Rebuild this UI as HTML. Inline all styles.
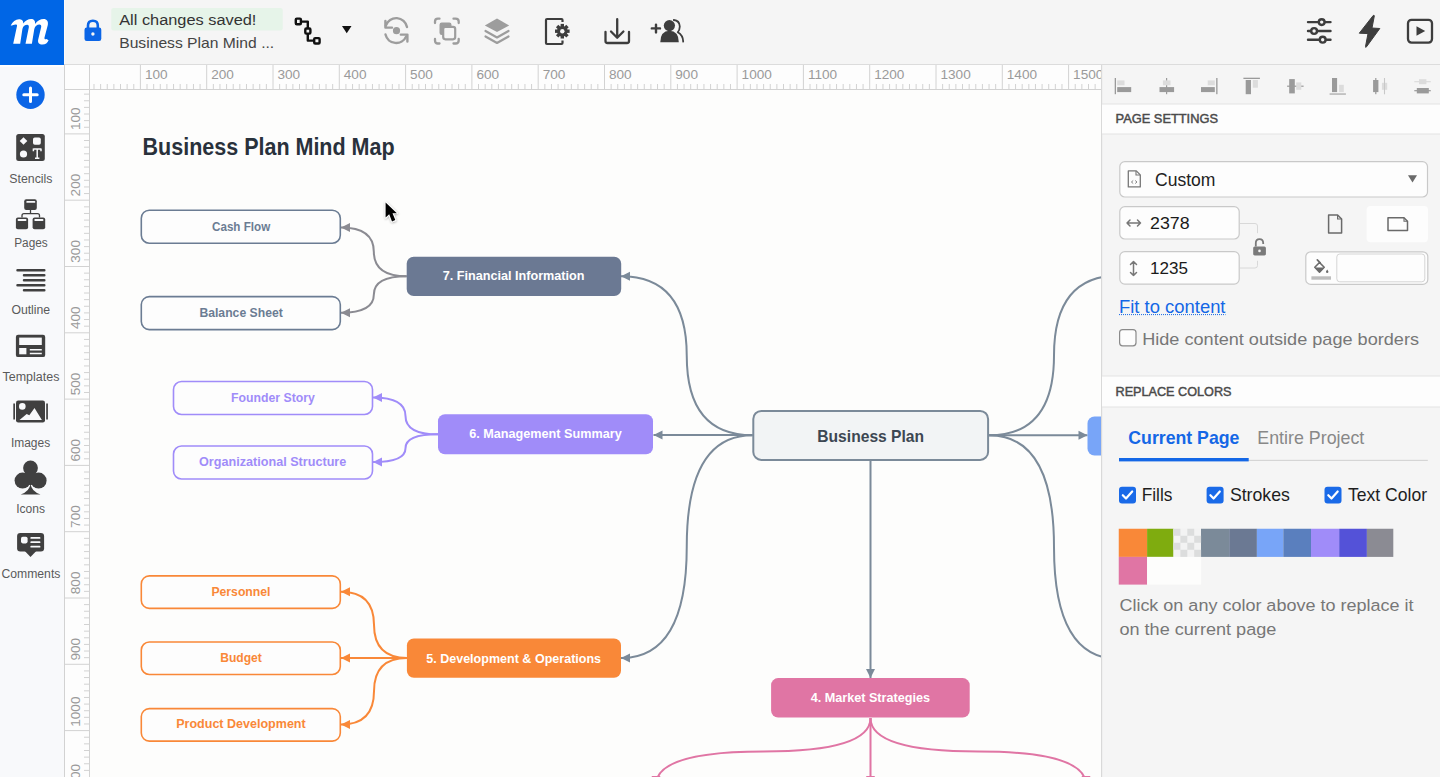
<!DOCTYPE html>
<html><head><meta charset="utf-8"><title>Moqups - Business Plan Mind Map</title>
<style>html,body{margin:0;padding:0;width:1440px;height:777px;overflow:hidden;background:#fdfdfc}svg{display:block;font-family:"Liberation Sans", sans-serif}</style></head>
<body><svg width="1440" height="777" viewBox="0 0 1440 777">
<rect x="0" y="0" width="1440" height="777" fill="#fdfdfc"/>
<rect x="0" y="0" width="1440" height="64" fill="#f5f5f5"/>
<rect x="0" y="64" width="1440" height="1" fill="#dcdcdc"/>
<rect x="0" y="65" width="64" height="712" fill="#f8f9fb"/>
<rect x="0" y="0" width="64" height="65" fill="#0066e6"/>
<rect x="0" y="65" width="64" height="1.8" fill="#ffffff"/>
<rect x="64" y="0" width="1" height="64" fill="#fbfbfb"/>
<path d="M752.5 435.3 Q686.75 435.3 686.75 355.8 Q686.75 276.3 621 276.3 H630" fill="none" stroke="#7b8a99" stroke-width="2"/>
<path d="M621 276.3 L630 271.8 L630 280.8 Z" fill="#7b8a99"/>
<path d="M752.5 435 Q703.0 435 703.0 435.0 Q703.0 435 653.5 435 H662.5" fill="none" stroke="#7b8a99" stroke-width="2"/>
<path d="M653.5 435 L662.5 430.5 L662.5 439.5 Z" fill="#7b8a99"/>
<path d="M752.5 435.3 Q686.75 435.3 686.75 546.65 Q686.75 658 621 658 H630" fill="none" stroke="#7b8a99" stroke-width="2"/>
<path d="M621 658 L630 653.5 L630 662.5 Z" fill="#7b8a99"/>
<path d="M989 435.3 Q1038.25 435.3 1038.25 435.3 Q1038.25 435.3 1087.5 435.3 H1078.5" fill="none" stroke="#7b8a99" stroke-width="2"/>
<path d="M1087.5 435.3 L1078.5 430.8 L1078.5 439.8 Z" fill="#7b8a99"/>
<path d="M989 435.3 Q1054.0 435.3 1054.0 355.4 Q1054.0 275.5 1119 275.5 H1110" fill="none" stroke="#7b8a99" stroke-width="2"/>
<path d="M989 435.3 Q1054.0 435.3 1054.0 547.15 Q1054.0 659 1119 659 H1110" fill="none" stroke="#7b8a99" stroke-width="2"/>
<path d="M870.5 461 Q870.5 569.5 870.5 569.5 Q870.5 569.5 870.5 678 V669" fill="none" stroke="#7b8a99" stroke-width="2"/>
<path d="M870.5 678 L866.0 669 L875.0 669 Z" fill="#7b8a99"/>
<path d="M406.7 276.3 Q373.85 276.3 373.85 251.9 Q373.85 227.5 341 227.5 H350" fill="none" stroke="#8b8b92" stroke-width="2"/>
<path d="M341 227.5 L350 223.0 L350 232.0 Z" fill="#8b8b92"/>
<path d="M406.7 276.3 Q373.85 276.3 373.85 294.55 Q373.85 312.8 341 312.8 H350" fill="none" stroke="#8b8b92" stroke-width="2"/>
<path d="M341 312.8 L350 308.3 L350 317.3 Z" fill="#8b8b92"/>
<path d="M438 434.3 Q405.5 434.3 405.5 415.9 Q405.5 397.5 373 397.5 H382" fill="none" stroke="#a08cf9" stroke-width="2"/>
<path d="M373 397.5 L382 393.0 L382 402.0 Z" fill="#a08cf9"/>
<path d="M438 434.3 Q405.5 434.3 405.5 448.15 Q405.5 462 373 462 H382" fill="none" stroke="#a08cf9" stroke-width="2"/>
<path d="M373 462 L382 457.5 L382 466.5 Z" fill="#a08cf9"/>
<path d="M407 658 Q374.0 658 374.0 624.85 Q374.0 591.7 341 591.7 H350" fill="none" stroke="#f98838" stroke-width="2"/>
<path d="M341 591.7 L350 587.2 L350 596.2 Z" fill="#f98838"/>
<path d="M407 658 Q374.0 658 374.0 658.0 Q374.0 658 341 658 H350" fill="none" stroke="#f98838" stroke-width="2"/>
<path d="M341 658 L350 653.5 L350 662.5 Z" fill="#f98838"/>
<path d="M407 658 Q374.0 658 374.0 691.3 Q374.0 724.6 341 724.6 H350" fill="none" stroke="#f98838" stroke-width="2"/>
<path d="M341 724.6 L350 720.1 L350 729.1 Z" fill="#f98838"/>
<path d="M870.5 718 Q870.5 751.5 763.25 751.5 Q656 751.5 656 785 V776" fill="none" stroke="#e075a4" stroke-width="2"/>
<path d="M656 785 L651.5 776 L660.5 776 Z" fill="#e075a4"/>
<path d="M870.5 718 Q870.5 751.5 978.25 751.5 Q1086 751.5 1086 785 V776" fill="none" stroke="#e075a4" stroke-width="2"/>
<path d="M1086 785 L1081.5 776 L1090.5 776 Z" fill="#e075a4"/>
<path d="M870.5 718 Q870.5 751.5 870.5 751.5 Q870.5 751.5 870.5 785 V776" fill="none" stroke="#e075a4" stroke-width="2"/>
<path d="M870.5 785 L866.0 776 L875.0 776 Z" fill="#e075a4"/>
<rect x="141.3" y="210.2" width="199" height="33" fill="#fdfdfd" rx="8" stroke="#6b7c93" stroke-width="1.6"/>
<rect x="141.3" y="296.6" width="199" height="33" fill="#fdfdfd" rx="8" stroke="#6b7c93" stroke-width="1.6"/>
<rect x="406.7" y="256.7" width="214.5" height="39.3" fill="#6b7993" rx="7"/>
<rect x="173.5" y="381.5" width="199" height="33" fill="#fdfdfd" rx="8" stroke="#a08cf9" stroke-width="1.6"/>
<rect x="173.5" y="446" width="199" height="33" fill="#fdfdfd" rx="8" stroke="#a08cf9" stroke-width="1.6"/>
<rect x="438" y="414.2" width="215" height="40" fill="#a08cf9" rx="7"/>
<rect x="753.3" y="410.9" width="234.8" height="49" fill="#f2f4f5" rx="8" stroke="#7b8a99" stroke-width="2"/>
<rect x="1087.5" y="416.5" width="30" height="39" fill="#78a5f8" rx="7"/>
<rect x="141.3" y="575.9" width="199" height="32.5" fill="#fdfdfd" rx="8" stroke="#f98838" stroke-width="1.6"/>
<rect x="141.3" y="642" width="199" height="32.5" fill="#fdfdfd" rx="8" stroke="#f98838" stroke-width="1.6"/>
<rect x="141.3" y="708.6" width="199" height="32.5" fill="#fdfdfd" rx="8" stroke="#f98838" stroke-width="1.6"/>
<rect x="406.9" y="638.4" width="214.1" height="39.3" fill="#f98838" rx="7"/>
<rect x="771.1" y="678.1" width="198.6" height="39.4" fill="#e075a4" rx="7"/>
<text x="142.6" y="155.2" font-size="24.7" fill="#29313b" font-weight="700" textLength="252" lengthAdjust="spacingAndGlyphs">Business Plan Mind Map</text>
<text x="212" y="231" font-size="12.9" fill="#6b7c93" font-weight="700" textLength="58.2" lengthAdjust="spacingAndGlyphs">Cash Flow</text>
<text x="199.4" y="317" font-size="12.9" fill="#6b7c93" font-weight="700" textLength="83.4" lengthAdjust="spacingAndGlyphs">Balance Sheet</text>
<text x="442.8" y="280.4" font-size="12.9" fill="#ffffff" font-weight="700" textLength="141.7" lengthAdjust="spacingAndGlyphs">7. Financial Information</text>
<text x="231.1" y="402.1" font-size="12.9" fill="#a08cf9" font-weight="700" textLength="83.7" lengthAdjust="spacingAndGlyphs">Founder Story</text>
<text x="199" y="466.3" font-size="12.9" fill="#a08cf9" font-weight="700" textLength="147.3" lengthAdjust="spacingAndGlyphs">Organizational Structure</text>
<text x="469.2" y="438" font-size="12.9" fill="#ffffff" font-weight="700" textLength="152.5" lengthAdjust="spacingAndGlyphs">6. Management Summary</text>
<text x="817.3" y="442.4" font-size="17" fill="#3d4752" font-weight="700" textLength="106.8" lengthAdjust="spacingAndGlyphs">Business Plan</text>
<text x="211.4" y="596" font-size="12.9" fill="#f98838" font-weight="700" textLength="59.1" lengthAdjust="spacingAndGlyphs">Personnel</text>
<text x="220.2" y="662.2" font-size="12.9" fill="#f98838" font-weight="700" textLength="41.7" lengthAdjust="spacingAndGlyphs">Budget</text>
<text x="176.2" y="728.2" font-size="12.9" fill="#f98838" font-weight="700" textLength="129.5" lengthAdjust="spacingAndGlyphs">Product Development</text>
<text x="426.2" y="662.7" font-size="12.9" fill="#ffffff" font-weight="700" textLength="174.9" lengthAdjust="spacingAndGlyphs">5. Development &amp; Operations</text>
<text x="810.7" y="702" font-size="12.9" fill="#ffffff" font-weight="700" textLength="119.3" lengthAdjust="spacingAndGlyphs">4. Market Strategies</text>
<defs><filter id="sh" x="-50%" y="-50%" width="200%" height="200%"><feDropShadow dx="0.3" dy="0.8" stdDeviation="0.9" flood-color="#000" flood-opacity="0.35"/></filter></defs>
<path d="M385.6 202.4 L385.6 217.6 L389.2 214.2 L392 221.4 L395.3 220.1 L392.5 213.2 L396.9 213.2 Z" fill="#000" stroke="#fff" stroke-width="1.8" stroke-linejoin="round" paint-order="stroke" filter="url(#sh)"/>
<rect x="64" y="65" width="1037" height="24" fill="#fdfdfd"/>
<rect x="64" y="65" width="25" height="712" fill="#fdfdfd"/>
<rect x="64" y="64" width="1" height="713" fill="#d2d2d2"/>
<rect x="64" y="89" width="1037" height="1" fill="#d2d2d2"/>
<rect x="89" y="65" width="1" height="712" fill="#d2d2d2"/>
<path d="M93.99 84V89 M100.62 84V89 M107.25 84V89 M113.88 84V89 M120.51 84V89 M127.14 84V89 M133.77 84V89 M140.40 65V89 M147.03 84V89 M153.66 84V89 M160.29 84V89 M166.92 84V89 M173.55 84V89 M180.18 84V89 M186.81 84V89 M193.44 84V89 M200.07 84V89 M206.70 65V89 M213.33 84V89 M219.96 84V89 M226.59 84V89 M233.22 84V89 M239.85 84V89 M246.48 84V89 M253.11 84V89 M259.74 84V89 M266.37 84V89 M273.00 65V89 M279.63 84V89 M286.26 84V89 M292.89 84V89 M299.52 84V89 M306.15 84V89 M312.78 84V89 M319.41 84V89 M326.04 84V89 M332.67 84V89 M339.30 65V89 M345.93 84V89 M352.56 84V89 M359.19 84V89 M365.82 84V89 M372.45 84V89 M379.08 84V89 M385.71 84V89 M392.34 84V89 M398.97 84V89 M405.60 65V89 M412.23 84V89 M418.86 84V89 M425.49 84V89 M432.12 84V89 M438.75 84V89 M445.38 84V89 M452.01 84V89 M458.64 84V89 M465.27 84V89 M471.90 65V89 M478.53 84V89 M485.16 84V89 M491.79 84V89 M498.42 84V89 M505.05 84V89 M511.68 84V89 M518.31 84V89 M524.94 84V89 M531.57 84V89 M538.20 65V89 M544.83 84V89 M551.46 84V89 M558.09 84V89 M564.72 84V89 M571.35 84V89 M577.98 84V89 M584.61 84V89 M591.24 84V89 M597.87 84V89 M604.50 65V89 M611.13 84V89 M617.76 84V89 M624.39 84V89 M631.02 84V89 M637.65 84V89 M644.28 84V89 M650.91 84V89 M657.54 84V89 M664.17 84V89 M670.80 65V89 M677.43 84V89 M684.06 84V89 M690.69 84V89 M697.32 84V89 M703.95 84V89 M710.58 84V89 M717.21 84V89 M723.84 84V89 M730.47 84V89 M737.10 65V89 M743.73 84V89 M750.36 84V89 M756.99 84V89 M763.62 84V89 M770.25 84V89 M776.88 84V89 M783.51 84V89 M790.14 84V89 M796.77 84V89 M803.40 65V89 M810.03 84V89 M816.66 84V89 M823.29 84V89 M829.92 84V89 M836.55 84V89 M843.18 84V89 M849.81 84V89 M856.44 84V89 M863.07 84V89 M869.70 65V89 M876.33 84V89 M882.96 84V89 M889.59 84V89 M896.22 84V89 M902.85 84V89 M909.48 84V89 M916.11 84V89 M922.74 84V89 M929.37 84V89 M936.00 65V89 M942.63 84V89 M949.26 84V89 M955.89 84V89 M962.52 84V89 M969.15 84V89 M975.78 84V89 M982.41 84V89 M989.04 84V89 M995.67 84V89 M1002.30 65V89 M1008.93 84V89 M1015.56 84V89 M1022.19 84V89 M1028.82 84V89 M1035.45 84V89 M1042.08 84V89 M1048.71 84V89 M1055.34 84V89 M1061.97 84V89 M1068.60 65V89 M1075.23 84V89 M1081.86 84V89 M1088.49 84V89 M1095.12 84V89 M84 94.12H89 M84 100.75H89 M84 107.38H89 M84 114.01H89 M84 120.64H89 M84 127.27H89 M64 133.90H89 M84 140.53H89 M84 147.16H89 M84 153.79H89 M84 160.42H89 M84 167.05H89 M84 173.68H89 M84 180.31H89 M84 186.94H89 M84 193.57H89 M64 200.20H89 M84 206.83H89 M84 213.46H89 M84 220.09H89 M84 226.72H89 M84 233.35H89 M84 239.98H89 M84 246.61H89 M84 253.24H89 M84 259.87H89 M64 266.50H89 M84 273.13H89 M84 279.76H89 M84 286.39H89 M84 293.02H89 M84 299.65H89 M84 306.28H89 M84 312.91H89 M84 319.54H89 M84 326.17H89 M64 332.80H89 M84 339.43H89 M84 346.06H89 M84 352.69H89 M84 359.32H89 M84 365.95H89 M84 372.58H89 M84 379.21H89 M84 385.84H89 M84 392.47H89 M64 399.10H89 M84 405.73H89 M84 412.36H89 M84 418.99H89 M84 425.62H89 M84 432.25H89 M84 438.88H89 M84 445.51H89 M84 452.14H89 M84 458.77H89 M64 465.40H89 M84 472.03H89 M84 478.66H89 M84 485.29H89 M84 491.92H89 M84 498.55H89 M84 505.18H89 M84 511.81H89 M84 518.44H89 M84 525.07H89 M64 531.70H89 M84 538.33H89 M84 544.96H89 M84 551.59H89 M84 558.22H89 M84 564.85H89 M84 571.48H89 M84 578.11H89 M84 584.74H89 M84 591.37H89 M64 598.00H89 M84 604.63H89 M84 611.26H89 M84 617.89H89 M84 624.52H89 M84 631.15H89 M84 637.78H89 M84 644.41H89 M84 651.04H89 M84 657.67H89 M64 664.30H89 M84 670.93H89 M84 677.56H89 M84 684.19H89 M84 690.82H89 M84 697.45H89 M84 704.08H89 M84 710.71H89 M84 717.34H89 M84 723.97H89 M64 730.60H89 M84 737.23H89 M84 743.86H89 M84 750.49H89 M84 757.12H89 M84 763.75H89 M84 770.38H89" stroke="#d2d2d2" stroke-width="1" fill="none"/>
<text x="144.9" y="79.3" font-size="13.6" fill="#9a9a9a">100</text>
<text x="211.2" y="79.3" font-size="13.6" fill="#9a9a9a">200</text>
<text x="277.5" y="79.3" font-size="13.6" fill="#9a9a9a">300</text>
<text x="343.8" y="79.3" font-size="13.6" fill="#9a9a9a">400</text>
<text x="410.1" y="79.3" font-size="13.6" fill="#9a9a9a">500</text>
<text x="476.4" y="79.3" font-size="13.6" fill="#9a9a9a">600</text>
<text x="542.7" y="79.3" font-size="13.6" fill="#9a9a9a">700</text>
<text x="609.0" y="79.3" font-size="13.6" fill="#9a9a9a">800</text>
<text x="675.3" y="79.3" font-size="13.6" fill="#9a9a9a">900</text>
<text x="741.6" y="79.3" font-size="13.6" fill="#9a9a9a">1000</text>
<text x="807.9" y="79.3" font-size="13.6" fill="#9a9a9a">1100</text>
<text x="874.2" y="79.3" font-size="13.6" fill="#9a9a9a">1200</text>
<text x="940.5" y="79.3" font-size="13.6" fill="#9a9a9a">1300</text>
<text x="1006.8" y="79.3" font-size="13.6" fill="#9a9a9a">1400</text>
<text x="1073.1" y="79.3" font-size="13.6" fill="#9a9a9a">1500</text>
<g>
<text transform="translate(79.8 130.10) rotate(-90)" font-size="13.6" fill="#9a9a9a">100</text>
<text transform="translate(79.8 196.40) rotate(-90)" font-size="13.6" fill="#9a9a9a">200</text>
<text transform="translate(79.8 262.70) rotate(-90)" font-size="13.6" fill="#9a9a9a">300</text>
<text transform="translate(79.8 329.00) rotate(-90)" font-size="13.6" fill="#9a9a9a">400</text>
<text transform="translate(79.8 395.30) rotate(-90)" font-size="13.6" fill="#9a9a9a">500</text>
<text transform="translate(79.8 461.60) rotate(-90)" font-size="13.6" fill="#9a9a9a">600</text>
<text transform="translate(79.8 527.90) rotate(-90)" font-size="13.6" fill="#9a9a9a">700</text>
<text transform="translate(79.8 594.20) rotate(-90)" font-size="13.6" fill="#9a9a9a">800</text>
<text transform="translate(79.8 660.50) rotate(-90)" font-size="13.6" fill="#9a9a9a">900</text>
<text transform="translate(79.8 726.80) rotate(-90)" font-size="13.6" fill="#9a9a9a">1000</text>
<text transform="translate(79.8 793.10) rotate(-90)" font-size="13.6" fill="#9a9a9a">1100</text>
</g>
<rect x="1101" y="65" width="339" height="712" fill="#f5f5f5"/>
<rect x="1101" y="65" width="1.2" height="712" fill="#d9d9d9"/>
<rect x="1102" y="104" width="339" height="30" fill="#fdfdfd"/>
<rect x="1102" y="103.5" width="339" height="1" fill="#e3e3e3"/>
<rect x="1102" y="133.5" width="339" height="1" fill="#e3e3e3"/>
<rect x="1102" y="376" width="339" height="31" fill="#fdfdfd"/>
<rect x="1102" y="375.5" width="339" height="1" fill="#e3e3e3"/>
<rect x="1102" y="406.5" width="339" height="1" fill="#e3e3e3"/>
<rect x="1114.7" y="78" width="1.3" height="16.2" fill="#9a9a9a"/>
<rect x="1117.2" y="80.4" width="7.3" height="4.9" fill="#dcdcdc"/>
<rect x="1117.2" y="87.1" width="14" height="5" fill="#9a9a9a"/>
<rect x="1166" y="78" width="1.2" height="16.2" fill="#9a9a9a"/>
<rect x="1162.9" y="80.4" width="7.6" height="4.9" fill="#dcdcdc"/>
<rect x="1159.5" y="87.1" width="14.6" height="5" fill="#9a9a9a"/>
<rect x="1216.2" y="78" width="1.3" height="16.2" fill="#9a9a9a"/>
<rect x="1207.7" y="80.4" width="7.1" height="4.9" fill="#dcdcdc"/>
<rect x="1201" y="87.1" width="13.8" height="5" fill="#9a9a9a"/>
<rect x="1243.4" y="77.7" width="16.5" height="1.3" fill="#9a9a9a"/>
<rect x="1245.7" y="80" width="5.3" height="14.2" fill="#9a9a9a"/>
<rect x="1252.8" y="80" width="5.1" height="7.7" fill="#dcdcdc"/>
<rect x="1287.1" y="85.6" width="16.5" height="1.2" fill="#9a9a9a"/>
<rect x="1289.2" y="79.1" width="5.6" height="14.3" fill="#9a9a9a"/>
<rect x="1296.2" y="82.4" width="5.1" height="7.4" fill="#dcdcdc"/>
<rect x="1329.6" y="93.3" width="16.3" height="1.5" fill="#b5b5b5"/>
<rect x="1332" y="78" width="5.1" height="14.1" fill="#9a9a9a"/>
<rect x="1339.1" y="84.8" width="4.7" height="7.3" fill="#dcdcdc"/>
<rect x="1375.2" y="78" width="1.2" height="16.2" fill="#9a9a9a"/>
<rect x="1373.1" y="80" width="5.3" height="12.1" fill="#9a9a9a"/>
<rect x="1383.9" y="78" width="1.2" height="16.2" fill="#dcdcdc"/>
<rect x="1381.9" y="82.8" width="5.3" height="7" fill="#dcdcdc"/>
<rect x="1384" y="78" width="1" height="16.2" fill="#c8c8c8"/>
<rect x="1414.3" y="81.1" width="16.5" height="1.2" fill="#dcdcdc"/>
<rect x="1419" y="79.2" width="7.4" height="5" fill="#dcdcdc"/>
<rect x="1414.3" y="90.1" width="16.5" height="1.2" fill="#9a9a9a"/>
<rect x="1416.8" y="88" width="12" height="5.4" fill="#9a9a9a"/>
<text x="1115.6" y="123.1" font-size="12.6" fill="#4a4a4a" textLength="102.4" lengthAdjust="spacingAndGlyphs" stroke="#4a4a4a" stroke-width="0.45">PAGE SETTINGS</text>
<rect x="1119.8" y="161.6" width="307.7" height="35.4" fill="#fdfdfd" rx="5" stroke="#c9c9c9" stroke-width="1.2"/>
<path d="M1128.3 170.9 h8 l4 4 v12 h-12 z" fill="none" stroke="#777" stroke-width="1.3" stroke-linejoin="round"/>
<path d="M1136 171 v4 h4" fill="none" stroke="#777" stroke-width="1.1"/>
<path d="M1133.2 180.5 l-1.8 1.5 l1.8 1.5 M1135.2 180.5 l1.8 1.5 l-1.8 1.5" fill="none" stroke="#777" stroke-width="0.9"/>
<text x="1155" y="185.5" font-size="18.2" fill="#222" textLength="60.4" lengthAdjust="spacingAndGlyphs">Custom</text>
<path d="M1408 175.2 L1417 175.2 L1412.5 182.5 Z" fill="#6a6a6a"/>
<rect x="1119.8" y="206.6" width="119.4" height="32.4" fill="#fdfdfd" rx="5" stroke="#c9c9c9" stroke-width="1.2"/>
<rect x="1119.8" y="251.7" width="119.4" height="32.4" fill="#fdfdfd" rx="5" stroke="#c9c9c9" stroke-width="1.2"/>
<path d="M1127 223 H1140.5 M1130 220 L1127 223 L1130 226 M1137.5 220 L1140.5 223 L1137.5 226" fill="none" stroke="#777" stroke-width="1.5" stroke-linecap="round" stroke-linejoin="round"/>
<path d="M1133.5 261.5 V275.5 M1130.5 264.5 L1133.5 261.5 L1136.5 264.5 M1130.5 272.5 L1133.5 275.5 L1136.5 272.5" fill="none" stroke="#777" stroke-width="1.5" stroke-linecap="round" stroke-linejoin="round"/>
<text x="1150" y="229.3" font-size="17" fill="#1a1a1a" textLength="39.6" lengthAdjust="spacingAndGlyphs">2378</text>
<text x="1150" y="274.3" font-size="17" fill="#1a1a1a" textLength="38" lengthAdjust="spacingAndGlyphs">1235</text>
<path d="M1240 223.5 H1255 Q1257.5 223.5 1257.5 226 V233.2 M1257.5 260.8 V265.5 Q1257.5 268 1255 268 H1240" fill="none" stroke="#d8d8d8" stroke-width="1"/>
<path d="M1255.8 246.5 V243 Q1255.8 239.2 1259.5 239.2 Q1263.2 239.2 1263.2 243 V244" fill="none" stroke="#7a7a7a" stroke-width="1.8"/>
<rect x="1253.2" y="246.4" width="12.7" height="9" fill="#7a7a7a" rx="1.5"/>
<circle cx="1259.5" cy="250.9" r="1.3" fill="#f5f5f5"/>
<path d="M1328.6 215 h9 l4 4 v14 h-13 z" fill="none" stroke="#6a6a6a" stroke-width="1.5" stroke-linejoin="round"/>
<path d="M1337.6 215 v4 h4" fill="none" stroke="#6a6a6a" stroke-width="1.2"/>
<rect x="1366.6" y="205.9" width="61.4" height="36.4" fill="#fdfdfd" rx="4"/>
<path d="M1388 217.8 h16 l3.5 3.5 v9.2 h-19.5 z" fill="none" stroke="#6a6a6a" stroke-width="1.5" stroke-linejoin="round"/>
<path d="M1404 217.8 v3.5 h3.5" fill="none" stroke="#6a6a6a" stroke-width="1.1"/>
<rect x="1305.8" y="251.8" width="122" height="32.6" fill="#fdfdfd" rx="5" stroke="#c9c9c9" stroke-width="1.2"/>
<rect x="1336.8" y="254" width="88" height="27.8" fill="#fdfdfd" rx="3" stroke="#d5d5d5" stroke-width="1"/>
<path d="M1319.5 262.5 L1324.2 267.3 L1319.5 272.2 L1314.8 267.3 Z" fill="none" stroke="#6a6a6a" stroke-width="1.6" stroke-linejoin="round"/>
<path d="M1314.8 267.6 H1324.2 L1319.5 272.6 Z" fill="#6a6a6a"/>
<path d="M1317.3 259.8 L1320.2 262.8" stroke="#6a6a6a" stroke-width="1.7" stroke-linecap="round"/>
<path d="M1327.2 269.4 Q1328.8 271.5 1328.4 272.2 A1.3 1.3 0 0 1 1326 272.2 Q1325.6 271.5 1327.2 269.4 Z" fill="#6a6a6a"/>
<rect x="1311.4" y="276.3" width="19.6" height="3.4" fill="#bdbdbd"/>
<text x="1119" y="312.6" font-size="17.5" fill="#1467e6" textLength="106.5" lengthAdjust="spacingAndGlyphs">Fit to content</text>
<path d="M1119 314.6 H1225.5" stroke="#1467e6" stroke-width="1" stroke-dasharray="1 1"/>
<rect x="1119.6" y="329.6" width="16.4" height="16.2" fill="#fdfdfd" rx="3" stroke="#8a8a8a" stroke-width="1.2"/>
<text x="1142.2" y="344.7" font-size="17" fill="#777" textLength="276.8" lengthAdjust="spacingAndGlyphs">Hide content outside page borders</text>
<text x="1115.5" y="395.8" font-size="12.6" fill="#4a4a4a" textLength="116" lengthAdjust="spacingAndGlyphs" stroke="#4a4a4a" stroke-width="0.45">REPLACE COLORS</text>
<text x="1128.3" y="444.2" font-size="17.8" fill="#1467e6" font-weight="700" textLength="111.1" lengthAdjust="spacingAndGlyphs">Current Page</text>
<text x="1257.3" y="444.2" font-size="17.8" fill="#888" textLength="107" lengthAdjust="spacingAndGlyphs">Entire Project</text>
<rect x="1119" y="459.8" width="308.8" height="1.2" fill="#d5d5d5"/>
<rect x="1119" y="458" width="129.7" height="3.4" fill="#1467e6"/>
<rect x="1119" y="486.7" width="17" height="16.8" fill="#1a6ae8" rx="3"/>
<path d="M1122.8 495.2 L1126 498.5 L1132.2 491.5" fill="none" stroke="#fff" stroke-width="2.2" stroke-linecap="round" stroke-linejoin="round"/>
<rect x="1206.6" y="486.7" width="17" height="16.8" fill="#1a6ae8" rx="3"/>
<path d="M1210.3999999999999 495.2 L1213.6 498.5 L1219.8 491.5" fill="none" stroke="#fff" stroke-width="2.2" stroke-linecap="round" stroke-linejoin="round"/>
<rect x="1324.5" y="486.7" width="17" height="16.8" fill="#1a6ae8" rx="3"/>
<path d="M1328.3 495.2 L1331.5 498.5 L1337.7 491.5" fill="none" stroke="#fff" stroke-width="2.2" stroke-linecap="round" stroke-linejoin="round"/>
<text x="1141.7" y="501.2" font-size="17.8" fill="#1e1e1e" textLength="30.7" lengthAdjust="spacingAndGlyphs">Fills</text>
<text x="1229.9" y="501.2" font-size="17.8" fill="#1e1e1e" textLength="60" lengthAdjust="spacingAndGlyphs">Strokes</text>
<text x="1348" y="501.2" font-size="17.8" fill="#1e1e1e" textLength="79" lengthAdjust="spacingAndGlyphs">Text Color</text>
<rect x="1118.75" y="528.75" width="28.34999999999991" height="28.15" fill="#f98838"/>
<rect x="1147.1" y="528.75" width="26.40000000000009" height="28.15" fill="#7fac0f"/>
<rect x="1201" y="528.75" width="28.200000000000045" height="28.15" fill="#7b8a99"/>
<rect x="1229.2" y="528.75" width="27.700000000000045" height="28.15" fill="#6b7993"/>
<rect x="1256.9" y="528.75" width="26.399999999999864" height="28.15" fill="#78a5f8"/>
<rect x="1283.3" y="528.75" width="27.700000000000045" height="28.15" fill="#5a7fbe"/>
<rect x="1311" y="528.75" width="28.200000000000045" height="28.15" fill="#a08cf9"/>
<rect x="1339.2" y="528.75" width="27.700000000000045" height="28.15" fill="#5452d8"/>
<rect x="1366.9" y="528.75" width="26.399999999999864" height="28.15" fill="#8b8b93"/>
<rect x="1173.5" y="528.75" width="27.5" height="28.15" fill="#f3f3f3"/>
<path d="M1173.50 528.75h6.9v7.04h-6.9zM1187.30 528.75h6.9v7.04h-6.9zM1180.40 535.79h6.9v7.04h-6.9zM1194.20 535.79h6.9v7.04h-6.9zM1173.50 542.83h6.9v7.04h-6.9zM1187.30 542.83h6.9v7.04h-6.9zM1180.40 549.87h6.9v7.04h-6.9zM1194.20 549.87h6.9v7.04h-6.9z" fill="#dcdddd"/>
<rect x="1118.75" y="556.9" width="28.35" height="27.7" fill="#e075a4"/>
<rect x="1147.1" y="556.9" width="54" height="27.7" fill="#fdfdfc"/>
<text x="1119.4" y="611" font-size="17.2" fill="#777" textLength="294" lengthAdjust="spacingAndGlyphs">Click on any color above to replace it</text>
<text x="1119.4" y="634.6" font-size="17.2" fill="#777" textLength="157" lengthAdjust="spacingAndGlyphs">on the current page</text>
<path d="M88 29 V25.5 Q88 20.8 92.9 20.8 Q97.8 20.8 97.8 25.5 V29" fill="none" stroke="#0b65e6" stroke-width="2.6"/>
<rect x="84.5" y="27.5" width="16.8" height="13.5" fill="#0b65e6" rx="2.2"/>
<circle cx="92.9" cy="34" r="1.7" fill="#f5f5f5"/>
<rect x="111.3" y="8" width="171.4" height="22.5" fill="#e6f4e9" rx="2"/>
<text x="119.2" y="25.2" font-size="15.5" fill="#333" textLength="137.2" lengthAdjust="spacingAndGlyphs">All changes saved!</text>
<text x="119.2" y="47.7" font-size="15" fill="#444" textLength="155" lengthAdjust="spacingAndGlyphs">Business Plan Mind ...</text>
<g fill="none" stroke="#111" stroke-width="2.4" stroke-linejoin="round"><rect x="295.8" y="18.6" width="5.1" height="5.7" rx="1"/><rect x="305.3" y="28.5" width="5.1" height="5.1" rx="1"/><rect x="314.2" y="38.1" width="5.4" height="5.4" rx="1"/><path d="M301 21.6 H307.8 V28.5 M307.8 33.6 V40.6 H314.2"/></g>
<path d="M342 25.9 L351.5 25.9 L346.75 33.3 Z" fill="#111"/>
<g fill="none" stroke="#9d9d9d" stroke-width="2.4" stroke-linecap="round"><path d="M385.8 25.5 A11 11 0 0 1 407 27"/><path d="M406.2 36.5 A11 11 0 0 1 385.5 34.5"/></g>
<path d="M385.4 21 V27.6 H392 M407.4 41.5 V34.6 H400.8" fill="none" stroke="#9d9d9d" stroke-width="2.4" stroke-linecap="round" stroke-linejoin="round"/>
<circle cx="396.5" cy="30.7" r="3.6" fill="#9d9d9d"/>
<g fill="none" stroke="#9d9d9d" stroke-width="2.3" stroke-linecap="round"><path d="M435 23 V21.5 Q435 18.7 437.8 18.7 H439.5 M453.5 18.7 H455.5 Q458.7 18.7 458.7 21.5 V23 M458.7 39 V40.5 Q458.7 43.5 455.5 43.5 H453.5 M439.5 43.5 H437.8 Q435 43.5 435 40.5 V39"/></g>
<rect x="439.5" y="22.5" width="12" height="12.5" rx="2.2" fill="#9d9d9d"/>
<rect x="443.2" y="26.8" width="12" height="12.5" rx="2.2" fill="#f5f5f5" stroke="#9d9d9d" stroke-width="2.2"/>
<path d="M497 18.5 L509.2 25.5 L497 32 L484.8 25.5 Z" fill="#9d9d9d"/>
<path d="M485.5 31 L497 37.5 L508.5 31 M485.5 36.5 L497 43 L508.5 36.5" fill="none" stroke="#9d9d9d" stroke-width="2.2" stroke-linecap="round" stroke-linejoin="round"/>
<path d="M562.5 22 V20 Q562.5 19 561.5 19 H547 Q546 19 546 20 V43 Q546 44 547 44 H561.5 Q562.5 44 562.5 43 V40.5" fill="none" stroke="#3d3d3d" stroke-width="2.2"/>
<g transform="translate(562.3 31.2)"><circle r="5.3" fill="#3d3d3d"/><rect x="-1.7" y="-7.3" width="3.4" height="3.5" fill="#3d3d3d" transform="rotate(0)"/><rect x="-1.7" y="-7.3" width="3.4" height="3.5" fill="#3d3d3d" transform="rotate(45)"/><rect x="-1.7" y="-7.3" width="3.4" height="3.5" fill="#3d3d3d" transform="rotate(90)"/><rect x="-1.7" y="-7.3" width="3.4" height="3.5" fill="#3d3d3d" transform="rotate(135)"/><rect x="-1.7" y="-7.3" width="3.4" height="3.5" fill="#3d3d3d" transform="rotate(180)"/><rect x="-1.7" y="-7.3" width="3.4" height="3.5" fill="#3d3d3d" transform="rotate(225)"/><rect x="-1.7" y="-7.3" width="3.4" height="3.5" fill="#3d3d3d" transform="rotate(270)"/><rect x="-1.7" y="-7.3" width="3.4" height="3.5" fill="#3d3d3d" transform="rotate(315)"/><circle r="2.2" fill="#f5f5f5"/></g>
<path d="M617.2 19.2 V37.5 M611 31.5 L617.2 37.8 L623.4 31.5 M605.5 32 V41 Q605.5 43 607.5 43 H627 Q629 43 629 41 V32" fill="none" stroke="#3d3d3d" stroke-width="2.3" stroke-linecap="round" stroke-linejoin="round"/>
<path d="M651.8 28.4 H660 M656 24.6 V32.4" stroke="#3d3d3d" stroke-width="2.4" stroke-linecap="round"/>
<circle cx="669.4" cy="25.6" r="5.6" fill="#3d3d3d"/>
<path d="M660.3 42.2 Q660.3 31.2 669.4 30.8 Q678.8 31.2 678.8 42.2 Z" fill="#3d3d3d"/>
<path d="M673.8 20 Q679.5 20.5 679.8 26.5 Q679.6 30.5 677.8 32.2 Q683 35 683.2 41.6" fill="none" stroke="#3d3d3d" stroke-width="1.8" stroke-linecap="round" stroke-linejoin="round"/>
<g stroke="#3d3d3d" stroke-width="2.4" stroke-linecap="round" fill="#f5f5f5"><path d="M1308 22.1 H1330.5 M1308 31 H1330.5 M1308 39.7 H1330.5"/><circle cx="1321.7" cy="22.1" r="2.9"/><circle cx="1314.1" cy="31" r="2.9"/><circle cx="1322.7" cy="39.7" r="2.9"/></g>
<path d="M1373.2 15.5 Q1374.2 14.6 1374.3 16 L1372 28 L1379.8 28.5 L1366.5 46.8 Q1365.3 48 1365.5 46.5 L1368 33.6 L1359.3 33.2 Z" fill="#3d3d3d" stroke="#3d3d3d" stroke-width="1" stroke-linejoin="round"/>
<rect x="1408" y="19.8" width="24" height="22.8" rx="3.5" fill="none" stroke="#3d3d3d" stroke-width="2.3"/>
<path d="M1416.5 26.2 L1425.2 31 L1416.5 35.7 Z" fill="#3d3d3d"/>
<path fill="#fff" d="M10.7 25.5 C12.5 21.5 15.5 19.2 19 19.2 C21.5 19.2 23.5 20.5 23.2 23.5 C25.5 20.5 28 19 31 19 C34 19 35.5 21 35 24 C37.5 20.5 40.5 19 43.5 19 C47 19 48.5 21.5 47.8 25 L44.5 37.5 C44.2 39 45 39.8 46.5 39 L48.6 40.2 C47.5 43 45.5 44.5 42.5 44.5 C39 44.5 37.5 42.5 38.2 39.5 L41.2 27 C41.5 25.5 40.8 24.5 39.5 24.5 C37 24.5 35 26 34.3 29 L31.9 43.7 L25.5 43.7 L28.8 27.5 C29.1 25.8 28.5 24.8 27.2 24.8 C25 24.8 23 26 22.4 29 L20.2 43.7 L13.2 43.7 L17 26 C17.2 24.8 16.5 24.3 15.5 24.5 C14 24.8 12.5 25.5 10.7 25.5 Z"/>
<circle cx="30.5" cy="94.7" r="14.2" fill="#0b65e6"/>
<path d="M30.5 88 V101.4 M23.8 94.7 H37.2" stroke="#fff" stroke-width="3" stroke-linecap="round"/>
<rect x="16.2" y="134" width="28.6" height="27" fill="#404040" rx="2.5"/>
<path d="M23.5 137.2 L27.3 141 L23.5 144.8 L19.7 141 Z" fill="#f8f9fb"/>
<rect x="33" y="137.5" width="7.8" height="7.3" fill="#f8f9fb" rx="1.8"/>
<circle cx="23.5" cy="154" r="3.6" fill="#f8f9fb"/>
<path d="M33.4 149 H41 M37.2 149 V158.3 M35 158.3 H39.4 M33.4 148.4 V151.2 M41 148.4 V151.2" stroke="#f8f9fb" stroke-width="1.5" fill="none"/>
<text x="9.3" y="182.7" font-size="12" fill="#5a5a5a" textLength="43.2" lengthAdjust="spacingAndGlyphs">Stencils</text>
<rect x="24.2" y="199.2" width="12.6" height="10.8" fill="#404040" rx="2"/>
<rect x="15.9" y="217.6" width="12.2" height="11.7" fill="#404040" rx="2"/>
<rect x="32.6" y="217.6" width="12.6" height="11.7" fill="#404040" rx="2"/>
<rect x="26.3" y="200.9" width="9" height="1.9" fill="#f8f9fb" rx="0.9"/>
<rect x="17.6" y="219.1" width="8.9" height="1.9" fill="#f8f9fb" rx="0.9"/>
<rect x="34.3" y="219.1" width="9.2" height="1.9" fill="#f8f9fb" rx="0.9"/>
<path d="M30.5 210 V213.6 M22 217.6 V215.6 Q22 213.6 24 213.6 H37.5 Q39.5 213.6 39.5 215.6 V217.6" fill="none" stroke="#404040" stroke-width="1.3"/>
<text x="14.2" y="246.9" font-size="12" fill="#5a5a5a" textLength="33.5" lengthAdjust="spacingAndGlyphs">Pages</text>
<path d="M17.5 270.3 H44.3 M24 275.3 H44.3 M24 280.3 H44.3 M17.5 285.3 H44.3 M24 290.3 H44.3" stroke="#404040" stroke-width="2.5" stroke-linecap="round"/>
<text x="11.4" y="313.7" font-size="12" fill="#5a5a5a" textLength="38.8" lengthAdjust="spacingAndGlyphs">Outline</text>
<rect x="15.9" y="334.7" width="29.3" height="22.4" fill="#404040" rx="2.2"/>
<rect x="19.2" y="337.6" width="22.6" height="7.4" fill="#f8f9fb"/>
<rect x="19.2" y="348" width="7.2" height="6.3" fill="#f8f9fb"/>
<path d="M29.8 349.8 H41.8 M29.8 353.6 H41.8" stroke="#f8f9fb" stroke-width="1.5"/>
<text x="2.5" y="380.5" font-size="12" fill="#5a5a5a" textLength="56.9" lengthAdjust="spacingAndGlyphs">Templates</text>
<rect x="16" y="400.6" width="29" height="21.8" fill="#404040" rx="2.2"/>
<rect x="13.3" y="403.5" width="1.7" height="16" fill="#404040"/>
<rect x="46.2" y="403.5" width="1.7" height="16" fill="#404040"/>
<circle cx="22.3" cy="406.4" r="3.3" fill="#f8f9fb"/>
<path d="M19.5 419.9 L26.7 413.9 L29.3 415.2 L34.5 408 L41.9 419.9 Z" fill="#f8f9fb"/>
<text x="10.9" y="446.6" font-size="12" fill="#5a5a5a" textLength="39.3" lengthAdjust="spacingAndGlyphs">Images</text>
<g fill="#404040"><circle cx="30.5" cy="468" r="7.4"/><circle cx="22.6" cy="480.6" r="8"/><circle cx="38.6" cy="480.6" r="8"/><path d="M25.5 472 H35.5 V482 L31.5 485 H29.5 L25.5 482 Z"/><path d="M30.5 484 Q29.5 491.5 20.7 494.4 H40.5 Q31.5 491.5 30.5 484 Z"/></g>
<text x="16.2" y="513" font-size="12" fill="#5a5a5a" textLength="28.8" lengthAdjust="spacingAndGlyphs">Icons</text>
<rect x="17.1" y="532.9" width="27" height="18.6" fill="#404040" rx="3.2"/>
<path d="M24.8 551 L30.5 556.9 L36.3 551 Z" fill="#404040"/>
<rect x="21" y="536.8" width="6.6" height="6.6" fill="#f8f9fb" rx="1.8"/>
<path d="M31.2 537.9 H39.6 M31.2 542.2 H39.6 M31.2 546.7 H39.6" stroke="#f8f9fb" stroke-width="1.7" stroke-linecap="round"/>
<text x="1.4" y="578" font-size="12" fill="#5a5a5a" textLength="59" lengthAdjust="spacingAndGlyphs">Comments</text>
</svg></body></html>
